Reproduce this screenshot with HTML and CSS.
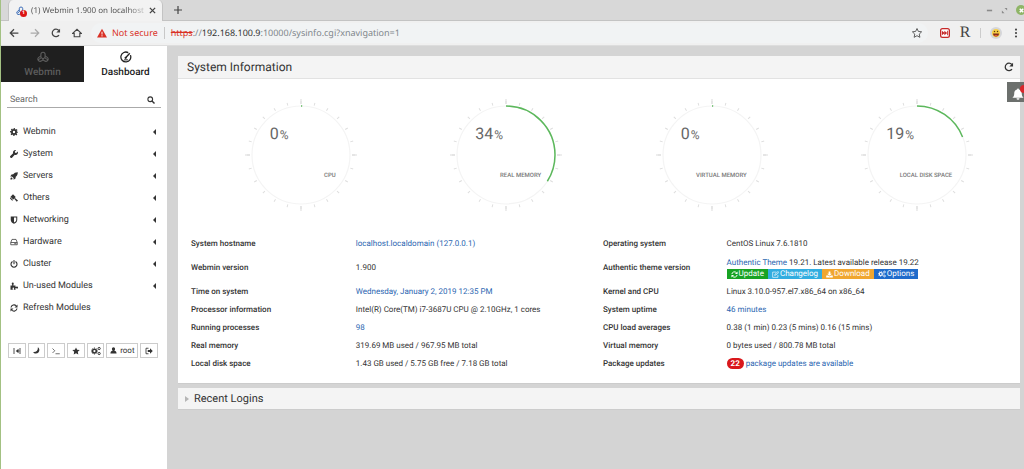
FILE: index.html
```html
<!DOCTYPE html>
<html lang="en">
<head>
<meta charset="utf-8">
<title>Webmin 1.900 on localhost.localdomain</title>
<link rel="stylesheet" href="styles.css">
</head>
<body>
<svg class="defs" aria-hidden="true">
  <symbol id="webmin" viewBox="0 0 16 16"><g fill="none" stroke="currentColor" stroke-width="1.500"><path d="M5.200 8.500V4.400a2.800 2.800 0 0 1 5.600 0v4.100L8 10.500z"/><path d="M5.200 6.500 2.300 8.500a2.900 2.900 0 0 0 2.800 5L8 12l2.900 1.500a2.900 2.900 0 0 0 2.800-5l-2.900-2M8 10v2.500M2 11.500l3-2M14 11.500l-3-2"/></g></symbol>
  <symbol id="gauge" viewBox="0 0 16 16"><g fill="none" stroke="currentColor" stroke-width="1.700"><path d="M13.900 5.500A6.600 6.600 0 1 1 11 2.200"/><path d="M7.500 9 13 3" stroke-width="1.800"/><path d="M5.500 11.800h5" stroke-width="1.400"/></g><circle cx="7.500" cy="9" r="1.500" fill="currentColor"/></symbol>
  <symbol id="search" viewBox="0 0 16 16"><circle cx="6.500" cy="6.500" r="4.700" fill="none" stroke="currentColor" stroke-width="2.200"/><path d="m10 10 5 5" stroke="currentColor" stroke-width="2.800"/></symbol>
  <symbol id="cog" viewBox="0 0 16 16"><circle cx="8" cy="8" r="4.200" fill="none" stroke="currentColor" stroke-width="3.600"/><circle cx="8" cy="8" r="6.700" fill="none" stroke="currentColor" stroke-width="2.600" pathLength="16" stroke-dasharray="1 1" stroke-dashoffset=".5"/></symbol>
  <symbol id="wrench" viewBox="0 0 16 16"><path fill="currentColor" d="M15.300 3.200 12.500 6l-2.300-.6-.6-2.300L12.300.4a4.700 4.700 0 0 0-6 6L.7 12a2 2 0 0 0 0 2.800l.5.5a2 2 0 0 0 2.800 0l5.500-5.600a4.700 4.700 0 0 0 5.800-6.500z"/></symbol>
  <symbol id="rocket" viewBox="0 0 16 16"><path fill="currentColor" d="M15.500.5C11 .3 8.500 2 6.500 4.500L3 5 .5 8.800l3.300.1 3.300 3.300.1 3.300L11 13l.5-3.500c2.500-2 4.200-4.500 4-9zM2.500 10.500C1 11.500 1 13 .8 15.200c2.200-.2 3.700-.2 4.700-1.700z"/></symbol>
  <symbol id="gavel" viewBox="0 0 16 16"><path fill="currentColor" d="M6 .5 11.500 6l-5 5L1 5.500zM8.500 9.500 10 8l6 5-2.500 2.500z"/><path fill="currentColor" d="M.5 6.500 6 12l-1.500 1.500L0 9z"/></symbol>
  <symbol id="shield" viewBox="0 0 16 16"><path fill="currentColor" fill-rule="evenodd" d="M1.500 1h13v7c0 4-3.500 6.500-6.500 7.500C5 14.500 1.500 12 1.500 8zM8 3v10c2.500-1 4.500-2.700 4.500-5V3z"/></symbol>
  <symbol id="disk" viewBox="0 0 16 16"><g fill="none" stroke="currentColor" stroke-width="1.500"><path d="M1.500 9 4 2.800h8L14.500 9v4.500h-13zM1.500 9h13"/><path d="M8.500 11.300H13"/></g></symbol>
  <symbol id="power" viewBox="0 0 16 16"><path fill="none" stroke="currentColor" stroke-width="2.200" stroke-linecap="round" d="M4.500 3.500a6 6 0 1 0 7 0M8 1v6.500"/></symbol>
  <symbol id="puzzle" viewBox="0 0 16 16"><path fill="currentColor" d="M1 7h3.500C4.500 5 3.500 4.500 3.500 3a2 2 0 0 1 4 0c0 1.500-.8 2-.8 4H11v3c1.500 0 2-.8 3.200-.8a1.900 1.900 0 0 1 0 3.800C13 13 12.500 12 11 12v3.500H7.500c0-1.500.6-2 .6-3a1.500 1.500 0 0 0-3 0c0 1 .6 1.500.6 3H1z"/></symbol>
  <symbol id="refresh" viewBox="0 0 16 16"><path fill="none" stroke="currentColor" stroke-width="2.200" d="M2 7a6 6 0 0 1 10.500-3M14 9a6 6 0 0 1-10.500 3"/><path fill="currentColor" d="M15 1v6H9zM1 15V9h6z"/></symbol>
  <symbol id="reload" viewBox="0 0 16 16"><path fill="none" stroke="currentColor" stroke-width="2" d="M12.800 11.500A6 6 0 1 1 12.500 4"/><path fill="currentColor" d="M14.500 1v6h-6z"/></symbol>
  <symbol id="collapse" viewBox="0 0 16 16"><path d="M2 2v12M14 2v12M9 8h4" stroke="currentColor" stroke-width="1.700"/><path fill="currentColor" d="M11 3.500v9L5.500 8z"/></symbol>
  <symbol id="moon" viewBox="0 0 16 16"><path fill="currentColor" d="M11 .5C17.500 5 14.500 15 6.500 15 3.800 15 1.500 13.800.5 11.500 7 12.500 12 8 11 .5z"/></symbol>
  <symbol id="terminal" viewBox="0 0 16 16"><path fill="none" stroke="currentColor" stroke-width="1.400" d="m1 3 4.500 4.500L1 12M7 13.500h8.500"/></symbol>
  <symbol id="star" viewBox="0 0 16 16"><path d="m8 .8 2.200 4.700 5.200.6-3.800 3.600 1 5.200L8 12.300l-4.600 2.600 1-5.200L.6 6.100l5.200-.6z"/></symbol>
  <symbol id="cogs" viewBox="0 0 16 16"><g fill="none" stroke="currentColor"><circle cx="5.500" cy="8" r="3" stroke-width="2.400"/><circle cx="5.500" cy="8" r="4.800" stroke-width="1.600" pathLength="16" stroke-dasharray="1 1" stroke-dashoffset=".5"/><circle cx="13" cy="4" r="1.800" stroke-width="1.600"/><circle cx="13" cy="12" r="1.800" stroke-width="1.600"/></g></symbol>
  <symbol id="user" viewBox="0 0 16 16"><path fill="currentColor" d="M8 .5c2.200 0 3.600 1.600 3.600 4 0 1.700-.7 3.200-1.800 4 3.500.6 5.200 2.500 5.200 6.500H1c0-4 1.700-5.900 5.200-6.500-1.100-.8-1.800-2.300-1.800-4 0-2.400 1.400-4 3.600-4z"/></symbol>
  <symbol id="exit" viewBox="0 0 16 16"><path fill="none" stroke="currentColor" stroke-width="1.700" d="M7 2.500H2v11h5"/><path fill="currentColor" d="M5.500 6H10V2.500L15.500 8 10 13.500V10H5.500z"/></symbol>
  <symbol id="edit" viewBox="0 0 16 16"><path fill="none" stroke="currentColor" stroke-width="1.500" d="M10 2.500H1.500v12h12V9M6 10l1-3 7-6 2 2-7 6z"/></symbol>
  <symbol id="download" viewBox="0 0 16 16"><path fill="currentColor" d="M6 1h4v5h3.500L8 11 2.500 6H6zM.5 10H5l3 2.500 3-2.500h4.500v5H.5z"/></symbol>
  <symbol id="bell" viewBox="0 0 16 16"><path fill="currentColor" d="M8 .5c.8 0 1.200.6 1.200 1.400C12 2.500 13 4.500 13 7c0 3 .8 4.500 2.500 6H.5C2.200 11.500 3 10 3 7c0-2.500 1-4.500 3.800-5.100C6.800 1.100 7.200.5 8 .5zM6 13.700h4a2 2 0 0 1-4 0z"/></symbol>
  <symbol id="ticks" viewBox="0 0 120 120"><g fill="none"><circle cx="60" cy="60" r="49" stroke="#f4f4f4" stroke-width="1.200"/><circle cx="60" cy="60" r="52.500" stroke="#dedede" stroke-width="3" pathLength="24" stroke-dasharray=".07 .93" stroke-dashoffset=".035"/><circle cx="60" cy="60" r="53.500" stroke="#dcdcdc" stroke-width="5" pathLength="4" stroke-dasharray=".012 .988" stroke-dashoffset=".006"/></g></symbol>
</svg>

<header class="browser">
  <div class="tabstrip">
    <div class="tab">
      <span class="favicon"><svg class="ic"><use href="#webmin"/></svg><b>1</b></span>
      <span class="tab-title">(1) Webmin 1.900 on localhost.</span>
      <button class="plain" aria-label="Close tab"><svg class="ic6" viewBox="0 0 8 8"><path d="m1 1 6 6M7 1 1 7" stroke="currentColor" stroke-width="1.500"/></svg></button>
    </div>
    <button class="plain newtab" aria-label="New tab"><svg class="ic8" viewBox="0 0 8 8"><path d="M4 0v8M0 4h8" stroke="currentColor" stroke-width="1.200"/></svg></button>
    <div class="winctl">
      <button class="plain" aria-label="Minimize"><svg class="ic6" viewBox="0 0 8 8"><path d="M1 4h6" stroke="currentColor" stroke-width="1.800"/></svg></button>
      <button class="plain" aria-label="Maximize"><svg class="ic6" viewBox="0 0 8 8"><path d="M4 1h3v3zM1 4v3h3z" fill="currentColor"/></svg></button>
      <button class="plain winclose" aria-label="Close window"><svg class="ic6" viewBox="0 0 8 8"><path d="m2 2 4 4M6 2 2 6" stroke="#fff" stroke-width="1.800"/></svg></button>
    </div>
  </div>
  <div class="toolbar">
    <nav class="nav">
      <button class="plain" aria-label="Back"><svg class="ic" viewBox="0 0 16 16"><path d="M15 8H2M8 2 2 8l6 6" fill="none" stroke="currentColor" stroke-width="2"/></svg></button>
      <button class="plain dim" aria-label="Forward"><svg class="ic" viewBox="0 0 16 16"><path d="M1 8h13M8 2l6 6-6 6" fill="none" stroke="currentColor" stroke-width="2"/></svg></button>
      <button class="plain" aria-label="Reload"><svg class="ic"><use href="#reload"/></svg></button>
      <button class="plain" aria-label="Home"><svg class="ic" viewBox="0 0 16 16"><path d="M1 8.500 8 2l7 6.500h-2.500V14h-9V8.500z" fill="none" stroke="currentColor" stroke-width="1.800"/></svg></button>
    </nav>
    <div class="omnibox">
      <svg class="ic warn" viewBox="0 0 16 16"><path d="M8 1 16 15H0z" fill="#d93025"/><path d="M8 6v4.500M8 11.500v2" stroke="#fff" stroke-width="1.500"/></svg>
      <span class="insecure">Not secure</span>
      <span class="url" role="textbox" aria-label="Address"><s>https</s>://<em>192.168.100.9</em>:10000/sysinfo.cgi?xnavigation=1</span>
      <button class="plain" aria-label="Bookmark"><svg class="ic outline"><use href="#star"/></svg></button>
    </div>
    <div class="extensions">
      <button class="plain" aria-label="Video speed"><svg class="ic" viewBox="0 0 16 16"><rect x="1" y="1" width="14" height="14" rx="3" fill="#fff" stroke="#c62828" stroke-width="2"/><path d="M3 4.500 7.500 8 3 11.500zM7 4.500 11.500 8 7 11.500zM11.500 4.500H13v7h-1.500z" fill="#c62828"/></svg></button>
      <button class="plain serif" aria-label="Reader">R</button>
      <span class="rule"></span>
      <button class="plain" aria-label="Profile"><svg class="ic12" viewBox="0 0 16 16"><circle cx="8" cy="8" r="8" fill="#d5d6da"/><circle cx="8" cy="8" r="5.500" fill="#f7cf46"/><circle cx="6" cy="6" r="1" fill="#5a3b12"/><circle cx="10" cy="6" r="1" fill="#5a3b12"/><path d="M4 8.500h8c0 2.500-1.800 4-4 4s-4-1.500-4-4z" fill="#7a2b1a"/><path d="M6 10.500h4v1.500H6z" fill="#e8593f"/></svg></button>
      <button class="plain" aria-label="Menu"><svg class="ic" viewBox="0 0 16 16"><g fill="currentColor"><circle cx="8" cy="2.500" r="1.700"/><circle cx="8" cy="8" r="1.700"/><circle cx="8" cy="13.500" r="1.700"/></g></svg></button>
    </div>
  </div>
</header>

<div class="page">
  <aside class="sidebar">
    <div class="switch">
      <button class="dark"><svg class="ic12"><use href="#webmin"/></svg>Webmin</button>
      <button class="light"><svg class="ic12"><use href="#gauge"/></svg>Dashboard</button>
    </div>
    <label class="search"><input type="text" placeholder="Search" aria-label="Search"><svg class="ic8"><use href="#search"/></svg></label>
    <ul class="menu">
      <li><a href="#"><svg class="ic8"><use href="#cog"/></svg>Webmin<i></i></a></li>
      <li><a href="#"><svg class="ic8"><use href="#wrench"/></svg>System<i></i></a></li>
      <li><a href="#"><svg class="ic8"><use href="#rocket"/></svg>Servers<i></i></a></li>
      <li><a href="#"><svg class="ic8"><use href="#gavel"/></svg>Others<i></i></a></li>
      <li><a href="#"><svg class="ic8"><use href="#shield"/></svg>Networking<i></i></a></li>
      <li><a href="#"><svg class="ic8"><use href="#disk"/></svg>Hardware<i></i></a></li>
      <li><a href="#"><svg class="ic8"><use href="#power"/></svg>Cluster<i></i></a></li>
      <li><a href="#"><svg class="ic8"><use href="#puzzle"/></svg>Un-used Modules<i></i></a></li>
      <li><a href="#"><svg class="ic8"><use href="#refresh"/></svg>Refresh Modules</a></li>
    </ul>
    <div class="tools">
      <button aria-label="Collapse"><svg class="ic8"><use href="#collapse"/></svg></button>
      <button aria-label="Night mode"><svg class="ic6"><use href="#moon"/></svg></button>
      <button aria-label="Terminal"><svg class="ic8"><use href="#terminal"/></svg></button>
      <button aria-label="Favorites"><svg class="ic8 solid"><use href="#star"/></svg></button>
      <button aria-label="Settings"><svg class="ic"><use href="#cogs"/></svg></button>
      <button class="user"><svg class="ic6"><use href="#user"/></svg>root</button>
      <button aria-label="Log out"><svg class="ic8"><use href="#exit"/></svg></button>
    </div>
  </aside>

  <main class="content">
    <section class="panel">
      <div class="panel-head">
        <h1>System Information</h1>
        <button class="plain" aria-label="Refresh"><svg class="ic"><use href="#reload"/></svg></button>
      </div>
      <div class="gauges">
        <div class="gauge">
          <svg viewBox="0 0 120 120"><use href="#ticks"/><circle class="arc" cx="60" cy="60" r="49" pathLength="100" stroke-dasharray="0.4 100" transform="rotate(-90 60 60)"/></svg>
          <div class="read"><div class="value">0<small>%</small></div><div class="name">CPU</div></div>
        </div>
        <div class="gauge">
          <svg viewBox="0 0 120 120"><use href="#ticks"/><circle class="arc" cx="60" cy="60" r="49" pathLength="100" stroke-dasharray="34 100" transform="rotate(-90 60 60)"/></svg>
          <div class="read"><div class="value">34<small>%</small></div><div class="name">REAL MEMORY</div></div>
        </div>
        <div class="gauge">
          <svg viewBox="0 0 120 120"><use href="#ticks"/><circle class="arc" cx="60" cy="60" r="49" pathLength="100" stroke-dasharray="0.4 100" transform="rotate(-90 60 60)"/></svg>
          <div class="read"><div class="value">0<small>%</small></div><div class="name">VIRTUAL MEMORY</div></div>
        </div>
        <div class="gauge">
          <svg viewBox="0 0 120 120"><use href="#ticks"/><circle class="arc" cx="60" cy="60" r="49" pathLength="100" stroke-dasharray="19 100" transform="rotate(-90 60 60)"/></svg>
          <div class="read"><div class="value">19<small>%</small></div><div class="name">LOCAL DISK SPACE</div></div>
        </div>
      </div>
      <table class="info">
        <colgroup><col class="c1"><col class="c2"><col class="c3"><col></colgroup>
        <tbody>
          <tr><th scope="row">System hostname</th><td><a href="#">localhost.localdomain (127.0.0.1)</a></td><th scope="row">Operating system</th><td>CentOS Linux 7.6.1810</td></tr>
          <tr><th scope="row">Webmin version</th><td>1.900</td><th scope="row">Authentic theme version</th><td class="theme"><div><a href="#">Authentic Theme</a> 19.21. Latest available release 19.22</div>
            <div class="actions"><button class="green"><svg class="ic6"><use href="#refresh"/></svg>Update</button><button class="cyan"><svg class="ic6"><use href="#edit"/></svg>Changelog</button><button class="orange"><svg class="ic6"><use href="#download"/></svg>Download</button><button class="blue"><svg class="ic8"><use href="#cogs"/></svg>Options</button></div></td></tr>
          <tr><th scope="row">Time on system</th><td><a href="#">Wednesday, January 2, 2019 12:35 PM</a></td><th scope="row">Kernel and CPU</th><td>Linux 3.10.0-957.el7.x86_64 on x86_64</td></tr>
          <tr><th scope="row">Processor information</th><td>Intel(R) Core(TM) i7-3687U CPU @ 2.10GHz, 1 cores</td><th scope="row">System uptime</th><td><a href="#">46 minutes</a></td></tr>
          <tr><th scope="row">Running processes</th><td><a href="#">98</a></td><th scope="row">CPU load averages</th><td>0.38 (1 min) 0.23 (5 mins) 0.16 (15 mins)</td></tr>
          <tr><th scope="row">Real memory</th><td>319.69 MB used / 967.95 MB total</td><th scope="row">Virtual memory</th><td>0 bytes used / 800.78 MB total</td></tr>
          <tr><th scope="row">Local disk space</th><td>1.43 GB used / 5.75 GB free / 7.18 GB total</td><th scope="row">Package updates</th><td><a href="#"><span class="count">22</span> package updates are available</a></td></tr>
        </tbody>
      </table>
    </section>
    <section class="panel">
      <button class="fold"><i></i>Recent Logins</button>
    </section>
  </main>
  <button class="notify" aria-label="Notifications"><svg class="ic12"><use href="#bell"/></svg><span></span></button>
</div>
</body>
</html>
```
FILE: styles.css
```css
* { box-sizing: border-box; }
body {
  margin: 0;
  min-height: 100vh;
  display: flex;
  flex-direction: column;
  border-left: 1px solid #a3c183;
  background: #d4d4d4;
  color: #333;
  font: 9px/12px Roboto, sans-serif;
  text-rendering: geometricPrecision;
  overflow-x: hidden;
}
button, input { font: inherit; color: inherit; margin: 0; text-rendering: inherit; }
button { cursor: pointer; }
svg { display: block; flex: none; }
a { color: #2b66b1; text-decoration: none; }
.defs { position: absolute; width: 0; height: 0; }
.ic { width: 10px; height: 10px; }
.ic6 { width: 7px; height: 7px; }
.ic8 { width: 8px; height: 8px; }
.ic12 { width: 12px; height: 12px; }
.plain { border: 0; padding: 0; background: none; display: flex; align-items: center; justify-content: center; }

/* Browser chrome */
.browser { font-family: "Noto Sans", sans-serif; color: #444; }
.tabstrip { display: flex; align-items: center; height: 21px; padding-left: 7px; background: #d8d8d8; border-bottom: 1px solid #c3c3c3; }
.tab { display: flex; align-items: center; gap: 5px; width: 155px; height: 21px; padding: 0 6px 0 7px; background: #f2f2f2; border: solid #c3c3c3; border-width: 0 1px; border-radius: 5px 5px 0 0; align-self: flex-start; }
.favicon { position: relative; color: #3567b5; }
.favicon b { position: absolute; right: -1px; bottom: -1px; width: 7px; height: 7px; border-radius: 50%; background: #dc1414; color: #fff; font-size: 5px; line-height: 7px; text-align: center; }
.tab-title { flex: 1; min-width: 0; white-space: nowrap; color: #555; font-size: 8px; mask-image: linear-gradient(90deg, #000 85%, transparent 105%); }
.newtab { margin-left: 11px; }
.winctl { margin-left: auto; display: flex; align-items: center; gap: 8px; color: #8a8a8a; overflow: hidden; }
.winclose { width: 10px; height: 10px; margin-right: -2px; border-radius: 50%; background: #8fb567; }
.toolbar { display: flex; align-items: center; height: 25px; padding: 0 3px 0 8px; background: #f0f0f0; border-bottom: 1px solid #ddd; }
.nav { display: flex; gap: 11px; }
.dim { color: #aaa; }
.omnibox { flex: 1; display: flex; align-items: center; height: 20px; margin: 0 12px 0 9px; padding: 0 6px; border-radius: 10px; background: #f1f3f4; font-size: 9px; }
.insecure { margin-left: 5px; padding-right: 6px; border-right: 1px solid #c8c8c8; color: #d93025; }
.url { flex: 1; padding-left: 6px; color: #80868b; }
.url s { color: #d93025; }
.url em { color: #333; font-style: normal; }
.outline { fill: none; stroke: #555; stroke-width: 1.5px; }
.solid { fill: currentColor; }
.extensions { display: flex; align-items: center; gap: 9px; }
.serif { width: 12px; font: 16px/20px "Liberation Serif", serif; }
.rule { width: 1px; height: 10px; background: #ccc; }

/* Sidebar */
.page { position: relative; flex: 1; display: flex; }
.sidebar { width: 166px; flex: none; background: #fff; }
.switch { display: grid; grid-template-columns: 1fr 1fr; }
.switch button { display: flex; flex-direction: column; align-items: center; gap: 2px; height: 36px; padding: 5px 0; border: 0; font-size: 10px; line-height: 16px; font-weight: 500; }
.switch .dark { background: #1f1f1f; color: #5c5c5c; }
.switch .light { background: #fff; color: #222; }
.search { display: flex; align-items: center; height: 16px; margin: 10px 6px 0; padding: 1px 6px 0 3px; border-bottom: 1px solid #aaa; }
.search input { flex: 1; min-width: 0; padding: 0; border: 0; outline: 0; background: none; }
.search input::placeholder { color: #666; }
.menu { list-style: none; margin: 13px 0 0; padding: 0; }
.menu a { display: flex; align-items: center; gap: 5px; height: 22px; padding: 0 11px 0 9px; color: #333; }
.menu i { margin-left: auto; border: solid transparent; border-width: 3px 3px 3px 0; border-right-color: #333; }
.tools { display: flex; gap: 2px; margin: 24px 9px 0 7px; }
.tools button { display: flex; align-items: center; justify-content: center; flex: 1; height: 15px; padding: 0; border: 1px solid #ccc; background: #fff; font-size: 8px; }
.tools .user { flex: 0 0 32px; gap: 3px; }

/* Content */
.content { flex: 1; min-width: 0; padding: 10px 4px 0 11px; display: flex; flex-direction: column; gap: 4px; }
.panel { background: #fff; border-bottom: 1px solid #ccc; }
.panel-head { display: flex; align-items: center; justify-content: space-between; height: 23px; padding: 0 6px 0 9px; background: #f4f4f4; border-bottom: 1px solid #e2e2e2; }
.panel-head h1 { margin: 0; font-size: 12px; font-weight: 400; }
.gauges { display: grid; grid-template-columns: repeat(4, 1fr); justify-items: center; padding: 16px 0 0 20px; }
.gauge { display: grid; width: 120px; }
.gauge > * { grid-area: 1 / 1; }
.arc { fill: none; stroke: #5cb85c; stroke-width: 1.5px; }
.read { padding: 29px 25px 0 29px; color: #666; }
.value { font-size: 16px; line-height: 20px; }
.value small { margin-left: 1px; font-size: 12px; }
.name { margin-top: 26px; font-size: 6px; line-height: 10px; font-weight: 500; text-align: right; white-space: nowrap; color: #777; }
.info { width: calc(100% - 18px); margin: 20px 9px 10px; border-collapse: collapse; table-layout: fixed; font-size: 8px; }
.c1 { width: 20%; }
.c2 { width: 30%; }
.c3 { width: 15%; }
.info th, .info td { height: 18px; padding: 0 4px; text-align: left; vertical-align: middle; white-space: nowrap; }
.info th { font-weight: 500; }
.info .theme { height: 30px; }
.actions { display: flex; }
.actions button { display: flex; align-items: center; gap: 1px; height: 10px; padding: 0 4px; border: 0; color: #fff; font-size: 8px; line-height: 10px; }
.green { background: #18a324; }
.cyan { background: #32ade0; }
.orange { background: #f0a630; }
.blue { background: #1f6bcb; }
.count { display: inline-block; padding: 0 4px; border-radius: 6px; background: #d9181c; color: #fff; font-weight: 700; line-height: 11px; }
.fold { display: flex; align-items: center; gap: 5px; width: 100%; height: 21px; padding: 0 7px; border: 0; background: #f4f4f4; font-size: 11px; }
.fold i { border: solid transparent; border-width: 3px 0 3px 4px; border-left-color: #b5b5b5; }
.notify { position: absolute; top: 36px; right: 0; width: 17px; height: 20px; padding: 4px 0 0 5px; border: 0; overflow: hidden; background: #6c706d; color: #fff; }
.notify span { position: absolute; top: 3px; right: -5px; width: 9px; height: 8px; border-radius: 4px; background: #d9262b; }
```
